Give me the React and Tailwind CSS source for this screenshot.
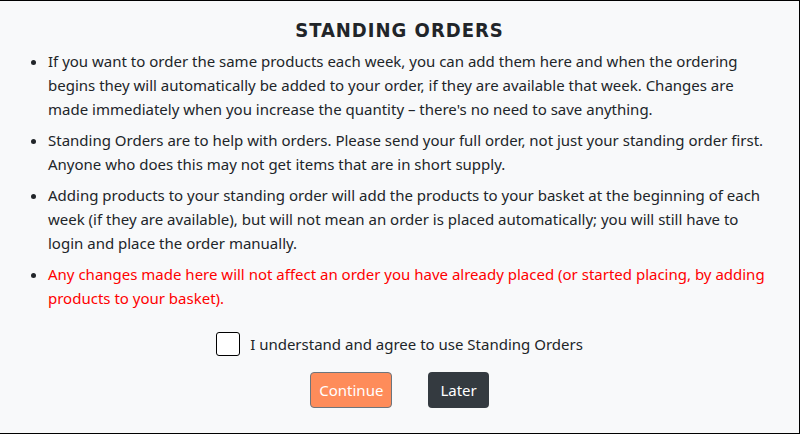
import React, { useState } from "react";

const bodyFont = { fontFamily: '"Noto Sans", "Open Sans", sans-serif' };

export default function App() {
  const [agreed, setAgreed] = useState(false);

  return (
    <div
      className="w-[800px] h-[434px] bg-[#f8f9fa] border-t border-r border-b border-black text-[#212529] text-[15px] leading-6"
      style={bodyFont}
    >
      <h1
        className="pt-[14px] h-[48px] text-center text-[20px] font-bold uppercase tracking-[1px] leading-[30px] text-[#212529]"
        style={{ fontFamily: '"DejaVu Sans Condensed", "DejaVu Sans", sans-serif' }}
      >
        Standing Orders
      </h1>

      <ul className="list-disc pl-12 pr-2 space-y-[7px]">
        <li>
          If you want to order the same products each week, you can add them here and when the ordering
          <br />
          begins they will automatically be added to your order, if they are available that week. Changes are
          <br />
          made immediately when you increase the quantity – there's no need to save anything.
        </li>
        <li>
          Standing Orders are to help with orders. Please send your full order, not just your standing order first.
          <br />
          Anyone who does this may not get items that are in short supply.
        </li>
        <li>
          Adding products to your standing order will add the products to your basket at the beginning of each
          <br />
          week (if they are available), but will not mean an order is placed automatically; you will still have to
          <br />
          login and place the order manually.
        </li>
        <li className="text-[#ff0000] marker:text-[#212529]">
          Any changes made here will not affect an order you have already placed (or started placing, by adding
          <br />
          products to your basket).
        </li>
      </ul>

      <label className="mt-[22px] flex items-center justify-center gap-[10px] cursor-pointer">
        <input
          type="checkbox"
          checked={agreed}
          onChange={() => setAgreed(!agreed)}
          className="appearance-none w-6 h-6 bg-white border border-black rounded-[3px] checked:bg-[#0d6efd]"
        />
        <span>I understand and agree to use Standing Orders</span>
      </label>

      <div className="mt-[16px] flex justify-center gap-9">
        <button className="h-9 px-2 bg-[#fe8c5a] text-white border border-[#6c757d] rounded">
          Continue
        </button>
        <button className="h-9 px-3 bg-[#343a40] text-white rounded">Later</button>
      </div>
    </div>
  );
}
